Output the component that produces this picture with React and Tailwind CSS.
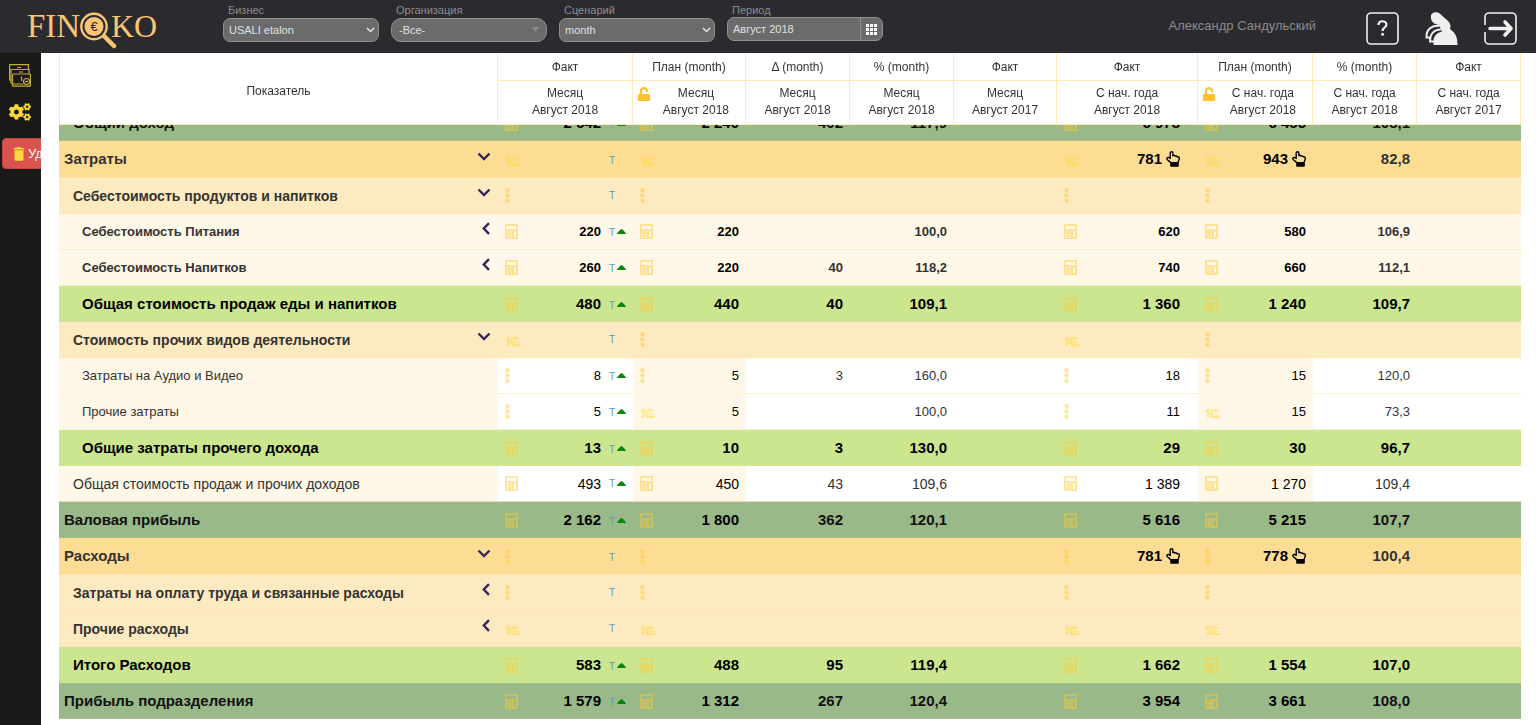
import React, { useLayoutEffect, useRef } from 'react';
import { FaCogs, FaUnlock } from 'react-icons/fa';
import { MdDelete } from 'react-icons/md';
import clsx from 'clsx';

// cell widths after the name column
const COLUMNS = [
  { title: 'Факт', period: 'Месяц', date: 'Август 2018', width: 'w-[135px]' },
  { title: 'План (month)', period: 'Месяц', date: 'Август 2018', width: 'w-[113px]', lock: true },
  { title: 'Δ (month)', period: 'Месяц', date: 'Август 2018', width: 'w-[104px]' },
  { title: '% (month)', period: 'Месяц', date: 'Август 2018', width: 'w-[104px]' },
  { title: 'Факт', period: 'Месяц', date: 'Август 2017', width: 'w-[103px]' },
  { title: 'Факт', period: 'С нач. года', date: 'Август 2018', width: 'w-[141px]' },
  { title: 'План (month)', period: 'С нач. года', date: 'Август 2018', width: 'w-[115px]', lock: true },
  { title: '% (month)', period: 'С нач. года', date: 'Август 2018', width: 'w-[104px]' },
  { title: 'Факт', period: 'С нач. года', date: 'Август 2017', width: 'w-[104px]' },
];

// icons: fact, plan, ytd fact, ytd plan (c = calculator, d = dots, o = 1C)
const ROWS = [
  { name: 'Общий доход', kind: 'total', level: 1, icons: 'cccc', v: ['2 642', '2 240', '402', '117,9', '6 978', '6 455', '108,1'] },
  { name: 'Затраты', kind: 'group', level: 0, open: true, icons: 'oooo', v: ['', '', '', '', '781', '943', '82,8'], hand: true },
  { name: 'Себестоимость продуктов и напитков', kind: 'sub', level: 1, open: true, icons: 'dddd', v: [] },
  { name: 'Себестоимость Питания', kind: 'item', level: 2, open: false, icons: 'cccc', v: ['220', '220', '', '100,0', '620', '580', '106,9'] },
  { name: 'Себестоимость Напитков', kind: 'item', level: 2, open: false, icons: 'cccc', v: ['260', '220', '40', '118,2', '740', '660', '112,1'] },
  { name: 'Общая стоимость продаж еды и напитков', kind: 'sum', level: 2, icons: 'cccc', v: ['480', '440', '40', '109,1', '1 360', '1 240', '109,7'] },
  { name: 'Стоимость прочих видов деятельности', kind: 'sub', level: 1, open: true, icons: 'odod', v: [] },
  { name: 'Затраты на Аудио и Видео', kind: 'leaf', level: 2, icons: 'dddd', v: ['8', '5', '3', '160,0', '18', '15', '120,0'] },
  { name: 'Прочие затраты', kind: 'leaf', level: 2, icons: 'dodo', v: ['5', '5', '', '100,0', '11', '15', '73,3'] },
  { name: 'Общие затраты прочего дохода', kind: 'sum', level: 2, icons: 'cccc', v: ['13', '10', '3', '130,0', '29', '30', '96,7'] },
  { name: 'Общая стоимость продаж и прочих доходов', kind: 'plain', level: 1, icons: 'cccc', v: ['493', '450', '43', '109,6', '1 389', '1 270', '109,4'] },
  { name: 'Валовая прибыль', kind: 'total', level: 0, icons: 'cccc', v: ['2 162', '1 800', '362', '120,1', '5 616', '5 215', '107,7'] },
  { name: 'Расходы', kind: 'group', level: 0, open: true, icons: 'dddd', v: ['', '', '', '', '781', '778', '100,4'], hand: true },
  { name: 'Затраты на оплату труда и связанные расходы', kind: 'sub', level: 1, open: false, icons: 'dddd', v: [] },
  { name: 'Прочие расходы', kind: 'sub', level: 1, open: false, icons: 'oooo', v: [] },
  { name: 'Итого Расходов', kind: 'sum', level: 1, icons: 'cccc', v: ['583', '488', '95', '119,4', '1 662', '1 554', '107,0'] },
  { name: 'Прибыль подразделения', kind: 'total', level: 0, icons: 'cccc', v: ['1 579', '1 312', '267', '120,4', '3 954', '3 661', '108,0'] },
];

const KIND = {
  total: 'h-9 bg-[#9ab988] text-[15px] font-bold text-[#111] border-[#a9bf86]',
  group: 'h-[37px] bg-[#fddd93] text-[15px] font-bold text-[#333] border-[#fde3a8]',
  sub: 'h-9 bg-[#feeac0] text-sm font-bold text-[#333] border-[#fee5b0]',
  item: 'h-9 bg-[#fff8e8] text-[13px] font-bold text-[#333] border-[#fdeecb]',
  sum: 'h-9 bg-[#cce68f] text-[15px] font-bold text-black border-[#d8e39a]',
  leaf: 'h-9 bg-white text-[13px] text-[#333] border-[#fdf3d8]',
  plain: 'h-9 bg-white text-sm text-[#333] border-[#e8ddb8]',
};

const INDENT = ['pl-[5px]', 'pl-[14px]', 'pl-[23px]'];

function Calculator() {
  return (
    <svg width="13" height="15" viewBox="0 0 13 15" className="fill-[#ffca3a] opacity-50" aria-hidden="true">
      <path
        fillRule="evenodd"
        d="M1 0h11a1 1 0 0 1 1 1v13a1 1 0 0 1-1 1H1a1 1 0 0 1-1-1V1a1 1 0 0 1 1-1zM1.7 1.7v3.6h9.6V1.7zM2 7.2v1.4h1.5V7.2zM5.4 7.2v1.4h1.5V7.2zM9 7.2v5.900h2V7.200zM2 10v1.300h1.500V10zM5.400 10v1.300h1.500V10zM2 12.400v1h1.500v-1zM5.400 12.400v1h1.500v-1z"
      />
    </svg>
  );
}

function Dots() {
  return (
    <svg width="5" height="15" viewBox="0 0 5 15" className="fill-[#ffca3a] opacity-50" aria-hidden="true">
      <circle cx="2.5" cy="2.2" r="2.2" />
      <circle cx="2.5" cy="7.5" r="2.2" />
      <circle cx="2.5" cy="12.8" r="2.2" />
    </svg>
  );
}

function OneC() {
  return (
    <svg width="16" height="11" viewBox="0 0 16 11" className="mt-1 fill-none stroke-[#ffd93b] opacity-50" aria-hidden="true">
      <path d="M.8 3.2 3.2 2v8" strokeWidth="2.4" />
      <path d="M13 4A3.600 3.600 0 1 0 9.700 9.100H15" strokeWidth="2.200" />
      <path d="M10.900 5A1.300 1.300 0 1 0 9.700 6.700H15" strokeWidth="1" />
    </svg>
  );
}

function CellIcon({ type }) {
  if (type === 'c') return <Calculator />;
  if (type === 'd') return <Dots />;
  return <OneC />;
}

function Hand() {
  return (
    <svg width="14" height="16" viewBox="0 0 14 16" fill="none" stroke="#000" strokeWidth="1.4" strokeLinejoin="round" aria-hidden="true">
      <path d="M4.600 11.800C3.800 10.200 2.200 9.800 1.100 8.300c-.7-1 .3-2.300 1.500-1.800L4.200 7.400V2.200c0-2 2.700-2 2.700 0v2.500c.9-.5 1.800-.3 2.100.4.900-.4 1.800-.1 2.100.7 1.100-.3 2.200.2 2.200 1.500 0 1.900-1.200 2.800-1.200 4.500z" />
      <path d="M4.900 12.400h7.200v2.600H4.900z" fill="#000" />
    </svg>
  );
}

function Chevron({ open }) {
  return (
    <button type="button" aria-label={open ? 'Свернуть' : 'Развернуть'} className="mb-1.5 shrink-0">
      {open ? (
        <svg width="14" height="9" viewBox="0 0 14 9" fill="none" stroke="#35255c" strokeWidth="2.4">
          <path d="m1.5 1.5 5.5 5.5 5.5-5.5" />
        </svg>
      ) : (
        <svg width="9" height="13" viewBox="0 0 9 13" fill="none" stroke="#35255c" strokeWidth="2.4">
          <path d="M7 1.2 1.8 6.5 7 11.8" />
        </svg>
      )}
    </button>
  );
}

function Row({ row }) {
  const split = row.kind === 'leaf' || row.kind === 'plain';
  const border = clsx('border-b border-inherit p-0', (row.kind === 'sum' || row.kind === 'total') && 'pt-0.5');
  const cream = split && 'bg-[#fff8e8]';
  const [fact, plan, delta, pct, yFact, yPlan, yPct] = row.v;

  return (
    <tr className={KIND[row.kind]}>
      <th scope="row" className={clsx(border, cream, 'text-left', split ? 'font-normal' : 'font-bold')}>
        <div className={clsx('flex items-center justify-between pr-[7px]', INDENT[row.level])}>
          <span>{row.name}</span>
          {row.open !== undefined && <Chevron open={row.open} />}
        </div>
      </th>
      <td className={border}>
        <div className="flex items-center px-[7px]">
          <CellIcon type={row.icons[0]} />
          <span className="ml-auto text-black">{fact}</span>
          <span className="ml-2 w-2 pt-0.5 text-[10px] font-normal text-[#5b9bc4]">Т</span>
          <span className="w-[9px]">
            {fact && (
              <svg width="9" height="5" viewBox="0 0 9 5" fill="#0a870a" aria-hidden="true">
                <path d="M0 5C.5 3 3.500.5 4.500 0 5.500.5 8.500 3 9 5z" />
              </svg>
            )}
          </span>
        </div>
      </td>
      <td className={clsx(border, cream)}>
        <div className="flex items-center justify-between px-[7px] text-black">
          <CellIcon type={row.icons[1]} />
          <span>{plan}</span>
        </div>
      </td>
      <td className={clsx(border, 'text-right')}>
        <span className="pr-[7px]">{delta}</span>
      </td>
      <td className={clsx(border, 'text-right')}>
        <span className="pr-[7px]">{pct}</span>
      </td>
      <td className={border} />
      <td className={border}>
        <div className="flex items-center justify-between pr-[18px] pl-[7px] text-black">
          <CellIcon type={row.icons[2]} />
          <span className="flex items-center gap-1">
            {yFact}
            {row.hand && <Hand />}
          </span>
        </div>
      </td>
      <td className={clsx(border, cream)}>
        <div className="flex items-center justify-between px-[7px] text-black">
          <CellIcon type={row.icons[3]} />
          <span className="flex items-center gap-1">
            {yPlan}
            {row.hand && <Hand />}
          </span>
        </div>
      </td>
      <td className={clsx(border, 'text-right')}>
        <span className="pr-[7px]">{yPct}</span>
      </td>
      <td className={border} />
    </tr>
  );
}

function ReportTable() {
  const scroller = useRef(null);

  useLayoutEffect(() => {
    scroller.current.scrollTop = 20;
  }, []);

  return (
    <main ref={scroller} className="min-w-0 flex-1 overflow-auto bg-white pr-[15px] pl-[18px] [scrollbar-width:none]">
      <table className="mb-10 w-full min-w-[1200px] table-fixed border-separate border-spacing-0">
        <colgroup>
          <col />
          {COLUMNS.map((col, i) => (
            <col key={i} className={col.width} />
          ))}
        </colgroup>
        <thead className="sticky top-0 z-10 bg-white text-xs text-[#333]">
          <tr className="h-7">
            <th rowSpan={2} className="border-r border-b border-l border-[#fdebbd] p-0 pt-1 font-normal">
              Показатель
            </th>
            {COLUMNS.map((col, i) => (
              <th key={i} className="border-r border-b border-[#fdebbd] p-0 font-normal">
                {col.title}
              </th>
            ))}
          </tr>
          <tr className="h-11">
            {COLUMNS.map((col, i) => (
              <th key={i} className="border-r border-b border-[#fdebbd] p-0 pb-0.5 font-normal">
                <div className={clsx('flex items-start', col.lock ? 'justify-between pr-4 pl-1' : 'justify-center')}>
                  {col.lock && <FaUnlock className="mt-0.5 size-3.5 text-[#ffc12e]" />}
                  <div className="leading-[17px]">
                    {col.period}
                    <br />
                    {col.date}
                  </div>
                </div>
              </th>
            ))}
          </tr>
        </thead>
        <tbody>
          {ROWS.map((row) => (
            <Row key={row.name} row={row} />
          ))}
        </tbody>
      </table>
    </main>
  );
}

function SelectField({ id, label, value, muted }) {
  return (
    <div className="w-[156px]">
      <label htmlFor={id} className="block pl-[5px] text-[11px] leading-[14px] text-[#8d8d8d]">
        {label}
      </label>
      <div className="relative">
        <select
          id={id}
          defaultValue={value}
          className={clsx(
            'h-6 w-full appearance-none border border-[#8f8f8f] bg-[#6b6b6b] text-[11px] text-[#e0e0e0]',
            muted ? 'rounded-[10px] pl-[7px]' : 'rounded-[7px] pl-[5px]'
          )}
        >
          <option>{value}</option>
        </select>
        {muted ? (
          <svg width="7" height="5" viewBox="0 0 7 5" className="pointer-events-none absolute top-2.5 right-2 fill-[#8c8c8c]">
            <path d="M0 0h7L3.5 5z" />
          </svg>
        ) : (
          <svg width="9" height="6" viewBox="0 0 9 6" className="pointer-events-none absolute top-2.5 right-1 fill-none stroke-[#e6e6e6]" strokeWidth="1.5">
            <path d="m1 1 3.5 3.5L8 1" />
          </svg>
        )}
      </div>
    </div>
  );
}

function Logo() {
  return (
    <svg width="132" height="42" viewBox="0 0 132 42" role="img" aria-label="FINOKO">
      <g fill="#f9c573" fontFamily="'Liberation Serif', serif">
        <text x="0" y="30" fontSize="33">FIN</text>
        <text x="84" y="30" fontSize="32">KO</text>
      </g>
      <path d="m77 29 10 10" stroke="#f9c573" strokeWidth="4.5" strokeLinecap="round" />
      <circle cx="67" cy="19.5" r="12.700" fill="#2b2a2f" stroke="#f9c573" strokeWidth="2.400" />
      <circle cx="67" cy="19.5" r="9.500" fill="#f9c573" />
      <text x="67" y="24" textAnchor="middle" fontFamily="'Liberation Sans', sans-serif" fontSize="13" fill="#2b2a2f">
        €
      </text>
    </svg>
  );
}

function TopBar() {
  return (
    <header className="flex h-[53px] shrink-0 bg-[#2b2a2f]">
      <a href="#" className="ml-[27px] w-[196px] pt-[7px]">
        <Logo />
      </a>
      <form className="flex gap-3 pt-[3px]">
        <SelectField id="business" label="Бизнес" value="USALI etalon" />
        <SelectField id="org" label="Организация" value="-Все-" muted />
        <SelectField id="scenario" label="Сценарий" value="month" />
        <div className="w-[156px]">
          <label htmlFor="period" className="block pl-[5px] text-[11px] leading-[14px] text-[#8d8d8d]">
            Период
          </label>
          <div className="flex h-6 overflow-hidden rounded-[7px] border border-[#8f8f8f] bg-[#6b6b6b]">
            <input id="period" defaultValue="Август 2018" className="min-w-0 flex-1 pl-[5px] text-[11px] text-[#e0e0e0]" />
            <button type="button" aria-label="Выбрать период" className="flex w-[22px] items-center justify-center border-l border-[#8f8f8f]">
              <svg width="11" height="11" viewBox="0 0 11 11" fill="#fff">
                {[0, 4, 8].map((y) => [0, 4, 8].map((x) => <rect key={`${x}${y}`} x={x} y={y} width="3" height="3" />))}
              </svg>
            </button>
          </div>
        </div>
      </form>
      <div className="ml-auto flex pr-[19px]">
        <span className="mr-[50px] pt-4 text-[13px] text-[#8b8b8b]">Александр Сандульский</span>
        <div className="flex items-start gap-[26px] pt-3 text-[#efefef]">
          <button type="button" aria-label="Помощь">
            <svg width="33" height="33" viewBox="0 0 33 33" fill="none" stroke="currentColor">
              <rect x="1" y="1" width="31" height="31" rx="4" strokeWidth="1.6" />
              <path d="M12.500 13c0-5 8-4.800 8-.4 0 3-3.900 2.800-3.900 6.400" strokeWidth="2.200" />
              <circle cx="16.600" cy="22.300" r="1.500" fill="currentColor" stroke="none" />
            </svg>
          </button>
          <button type="button" aria-label="Поддержка">
            <svg width="33" height="33" viewBox="0 0 33 33" fill="currentColor">
              <path d="M6 6C5 1 10-1 14 1l9 8c2.500 2.500 3 5.500 2 8l4 3.500c2.500 3 3.500 7 3.500 12.500h-24v-5C9 24 12 20.500 17 19.500L14 13C9 12 6.500 10 6 6z" />
              <path d="M1.800 26.500C0 18 7 12.500 14.500 14M5.500 30C4 22.500 9 17.500 16 17.500M1 25.500h4v4h4" fill="none" stroke="currentColor" strokeWidth="1.900" />
            </svg>
          </button>
          <button type="button" aria-label="Выход">
            <svg width="33" height="33" viewBox="0 0 33 33" fill="none" stroke="currentColor">
              <path d="M1 13V5a4 4 0 0 1 4-4h23a4 4 0 0 1 4 4v23a4 4 0 0 1-4 4H5a4 4 0 0 1-4-4v-8" strokeWidth="1.6" />
              <path d="M6 16.500h20M21 10l6 6.500-6 6.500" strokeWidth="3.600" strokeLinecap="round" strokeLinejoin="round" />
            </svg>
          </button>
        </div>
      </div>
    </header>
  );
}

function SideBar() {
  return (
    <nav className="flex w-[41px] shrink-0 flex-col overflow-hidden bg-[#191917] text-[#ffd83a]">
      <a href="#" aria-label="Платежи" className="mt-[11px] ml-[9px]">
        <svg width="22" height="23" viewBox="0 0 22 23" fill="none" stroke="#c9ab3a" strokeWidth="1.2">
          <path d="M2 16H.6V.6h18.800V5" />
          <path d="M3.500 19H2V5.500h18V10M8 3.500h4M10 8h4" />
          <rect x="3.500" y="10" width="18" height="12.200" rx="1" />
          <path d="M3.500 20H14M12.500 12.500v4.500" />
          <circle cx="17.500" cy="17.500" r="3" />
          <path d="M16 17.500h3" />
        </svg>
      </a>
      <a href="#" aria-label="Настройки" className="mt-3.5 ml-[9px]">
        <FaCogs className="size-[22px]" />
      </a>
      <button
        type="button"
        className="mt-[15px] ml-0.5 flex h-[31px] w-[90px] shrink-0 items-center rounded-[4px] border border-[#c9403c] bg-[#d9534f] pl-[7px] text-[13px] text-white"
      >
        <MdDelete className="size-[18px] shrink-0" color="#ffd83a" />
        Удалить
      </button>
    </nav>
  );
}

export default function App() {
  return (
    <div className="flex h-screen flex-col overflow-hidden font-['Liberation_Sans',Arial,sans-serif]">
      <TopBar />
      <div className="flex min-h-0 flex-1">
        <SideBar />
        <ReportTable />
      </div>
    </div>
  );
}
